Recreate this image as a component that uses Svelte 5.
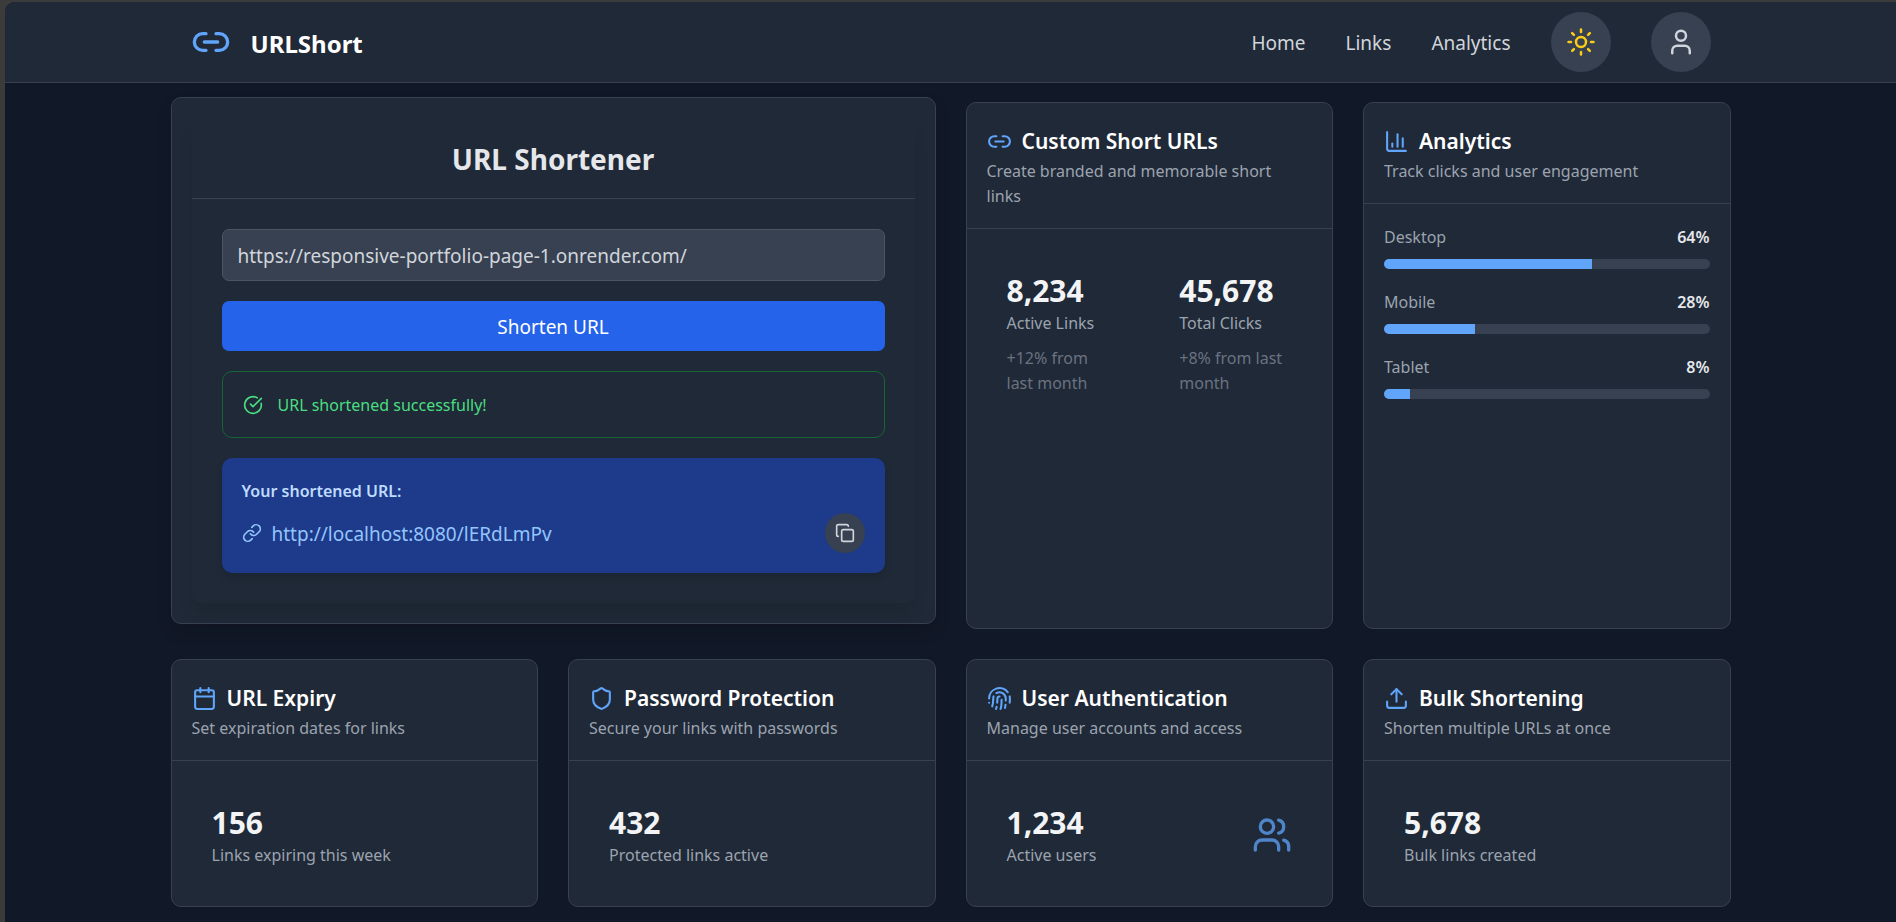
<script>
  const icons = {
    link2: '<path d="M9 17H7A5 5 0 0 1 7 7h2"/><path d="M15 7h2a5 5 0 1 1 0 10h-2"/><path d="M8 12h8"/>',
    sun: '<circle cx="12" cy="12" r="4"/><path d="M12 2v2"/><path d="M12 20v2"/><path d="m4.93 4.93 1.41 1.41"/><path d="m17.66 17.66 1.41 1.41"/><path d="M2 12h2"/><path d="M20 12h2"/><path d="m6.34 17.66-1.41 1.41"/><path d="m19.07 4.93-1.41 1.41"/>',
    user: '<path d="M19 21v-2a4 4 0 0 0-4-4H9a4 4 0 0 0-4 4v2"/><circle cx="12" cy="7" r="4"/>',
    check: '<path d="M21.801 10A10 10 0 1 1 17 3.335"/><path d="m9 11 3 3L22 4"/>',
    link: '<path d="M10 13a5 5 0 0 0 7.54.54l3-3a5 5 0 0 0-7.07-7.07l-1.72 1.71"/><path d="M14 11a5 5 0 0 0-7.54-.54l-3 3a5 5 0 0 0 7.07 7.07l1.71-1.71"/>',
    copy: '<rect x="8" y="8" width="14" height="14" rx="2"/><path d="M4 16c-1.1 0-2-.9-2-2V4c0-1.1.9-2 2-2h10c1.1 0 2 .9 2 2"/>',
    chart: '<path d="M3 3v16a2 2 0 0 0 2 2h16"/><path d="M18 17V9"/><path d="M13 17V5"/><path d="M8 17v-3"/>',
    calendar: '<path d="M8 2v4"/><path d="M16 2v4"/><rect x="3" y="4" width="18" height="18" rx="2"/><path d="M3 10h18"/>',
    shield: '<path d="M20 13c0 5-3.5 7.5-7.66 8.95a1 1 0 0 1-.67-.01C7.5 20.5 4 18 4 13V6a1 1 0 0 1 1-1c2 0 4.5-1.2 6.24-2.72a1.17 1.17 0 0 1 1.52 0C14.51 3.81 17 5 19 5a1 1 0 0 1 1 1z"/>',
    fingerprint: '<path d="M12 10a2 2 0 0 0-2 2c0 1.02-.1 2.51-.26 4"/><path d="M14 13.12c0 2.38 0 6.38-1 8.88"/><path d="M17.29 21.02c.12-.6.43-2.3.5-3.02"/><path d="M2 12a10 10 0 0 1 18-6"/><path d="M2 16h.01"/><path d="M21.8 16c.2-2 .131-5.354 0-6"/><path d="M5 19.5C5.5 18 6 15 6 12a6 6 0 0 1 .34-2"/><path d="M8.65 22c.21-.66.45-1.32.57-2"/><path d="M9 6.8a6 6 0 0 1 9 5.2v2"/>',
    users: '<path d="M16 21v-2a4 4 0 0 0-4-4H6a4 4 0 0 0-4 4v2"/><circle cx="9" cy="7" r="4"/><path d="M22 21v-2a4 4 0 0 0-3-3.87"/><path d="M16 3.13a4 4 0 0 1 0 7.75"/>',
    upload: '<path d="M21 15v4a2 2 0 0 1-2 2H5a2 2 0 0 1-2-2v-4"/><path d="m17 8-5-5-5 5"/><path d="M12 3v12"/>'
  };

  const devices = [
    { name: 'Desktop', share: 64 },
    { name: 'Mobile', share: 28 },
    { name: 'Tablet', share: 8 }
  ];

  const features = [
    { icon: 'calendar', title: 'URL Expiry', text: 'Set expiration dates for links', value: '156', label: 'Links expiring this week' },
    { icon: 'shield', title: 'Password Protection', text: 'Secure your links with passwords', value: '432', label: 'Protected links active' },
    { icon: 'fingerprint', title: 'User Authentication', text: 'Manage user accounts and access', value: '1,234', label: 'Active users', badge: 'users' },
    { icon: 'upload', title: 'Bulk Shortening', text: 'Shorten multiple URLs at once', value: '5,678', label: 'Bulk links created' }
  ];

  let url = $state('https://responsive-portfolio-page-1.onrender.com/');
  const shortUrl = 'http://localhost:8080/lERdLmPv';
</script>

{#snippet icon(name, kind)}
  <svg class="icon {kind}" viewBox="0 0 24 24" aria-hidden="true">{@html icons[name]}</svg>
{/snippet}

{#snippet heading(name, title, text)}
  <header class="card-head">
    <h2>{@render icon(name, 'title-icon')}{title}</h2>
    <p>{text}</p>
  </header>
{/snippet}

<div class="frame">
  <div class="page">
    <header class="topbar">
      <div class="bar">
        <a class="brand" href="#home">{@render icon('link2', 'large')}<span>URLShort</span></a>
        <nav>
          <a href="#home">Home</a>
          <a href="#links">Links</a>
          <a href="#analytics">Analytics</a>
          <button class="round sun" type="button" aria-label="Toggle theme">{@render icon('sun', 'medium')}</button>
          <button class="round" type="button" aria-label="Account">{@render icon('user', 'medium')}</button>
        </nav>
      </div>
    </header>

    <main>
      <section class="card raised">
        <div class="panel">
          <h1>URL Shortener</h1>
          <form onsubmit={(e) => e.preventDefault()}>
            <input type="text" aria-label="URL" bind:value={url} />
            <button class="submit" type="submit">Shorten URL</button>
            <div class="notice" role="status">{@render icon('check', 'small')}<span>URL shortened successfully!</span></div>
            <div class="result">
              <h3>Your shortened URL:</h3>
              <div class="result-row">
                <a href={shortUrl}>{@render icon('link', 'small')}<span>{shortUrl}</span></a>
                <button class="copy" type="button" aria-label="Copy">{@render icon('copy', 'small')}</button>
              </div>
            </div>
          </form>
        </div>
      </section>

      <section class="card">
        {@render heading('link2', 'Custom Short URLs', 'Create branded and memorable short links')}
        <div class="card-body pair">
          <div class="stat">
            <div>
              <strong>8,234</strong>
              <p>Active Links</p>
              <p class="trend">+12% from last month</p>
            </div>
          </div>
          <div class="stat">
            <div>
              <strong>45,678</strong>
              <p>Total Clicks</p>
              <p class="trend">+8% from last month</p>
            </div>
          </div>
        </div>
      </section>

      <section class="card">
        {@render heading('chart', 'Analytics', 'Track clicks and user engagement')}
        <div class="card-body devices">
          {#each devices as device}
            <div class="device">
              <div class="device-row"><span>{device.name}</span><b>{device.share}%</b></div>
              <div class="track" role="progressbar" aria-label={device.name} aria-valuenow={device.share} aria-valuemin="0" aria-valuemax="100">
                <div class="fill" style="width: {device.share}%"></div>
              </div>
            </div>
          {/each}
        </div>
      </section>

      {#each features as f}
        <section class="card">
          {@render heading(f.icon, f.title, f.text)}
          <div class="card-body">
            <div class="stat">
              <div>
                <strong>{f.value}</strong>
                <p>{f.label}</p>
              </div>
              {#if f.badge}{@render icon(f.badge, 'large faded')}{/if}
            </div>
          </div>
        </section>
      {/each}
    </main>
  </div>
</div>

<style>
  :global(body) {
    background: #3b3b3b;
  }

  .frame,
  .frame :global(*) {
    box-sizing: border-box;
  }

  .frame {
    display: flex;
    min-height: 100vh;
    padding: 2px 0 0 5px;
    font-family: "Noto Sans", "Open Sans", sans-serif;
    font-size: 16px;
    line-height: 25px;
    color: #9ca3af;
  }

  .page {
    flex: 1;
    background: #111827;
    border-top-left-radius: 10px;
    overflow: hidden;
  }

  h1, h2, h3, p {
    margin: 0;
  }

  a {
    color: inherit;
    text-decoration: none;
  }

  button {
    padding: 0;
    border: 0;
    font: inherit;
    cursor: pointer;
  }

  .icon {
    flex: none;
    width: 20px;
    height: 20px;
    fill: none;
    stroke: currentColor;
    stroke-width: 2;
    stroke-linecap: round;
    stroke-linejoin: round;
  }

  .title-icon {
    width: 25px;
    height: 25px;
    color: #60a5fa;
  }

  .medium {
    width: 30px;
    height: 30px;
  }

  .large {
    width: 40px;
    height: 40px;
    color: #60a5fa;
  }

  .faded {
    opacity: 0.75;
  }

  .topbar {
    background: #1f2937;
    border-bottom: 1px solid #374151;
  }

  .bar {
    display: flex;
    align-items: center;
    justify-content: space-between;
    max-width: 1600px;
    height: 80px;
    margin: 0 auto;
    padding: 0 40px;
  }

  .brand {
    display: flex;
    align-items: center;
    gap: 20px;
    font-size: 24px;
    font-weight: 700;
    color: #fff;
  }

  .brand span,
  .result-row span,
  nav a {
    padding-top: 2px;
  }

  nav {
    display: flex;
    align-items: center;
    gap: 40px;
    font-size: 19px;
    color: #d1d5db;
  }

  .round {
    display: grid;
    place-items: center;
    width: 60px;
    height: 60px;
    border-radius: 50%;
    background: #374151;
    color: #d1d5db;
  }

  .sun {
    color: #facc15;
  }

  main {
    display: grid;
    grid-template-columns: repeat(4, minmax(0, 1fr));
    gap: 30px;
    max-width: 1600px;
    margin: 0 auto;
    padding: 19px 20px 10px;
  }

  .card {
    background: #1f2937;
    border: 1px solid #374151;
    border-radius: 10px;
  }

  .raised {
    grid-column: span 2;
    padding: 20px;
    transform: translateY(-5px);
    box-shadow: 0 8px 16px rgba(0, 0, 0, 0.12);
  }

  .panel {
    border-radius: 10px;
    box-shadow: 0 12px 18px -4px rgba(0, 0, 0, 0.1);
  }

  h1 {
    padding: 21px 20px 19px;
    border-bottom: 1px solid #374151;
    font-size: 28px;
    line-height: 40px;
    font-weight: 700;
    text-align: center;
    color: #e5e7eb;
  }

  form {
    display: flex;
    flex-direction: column;
    gap: 20px;
    padding: 30px;
  }

  input {
    width: 100%;
    height: 52px;
    padding: 2px 15px 0;
    border: 1px solid #4b5563;
    border-radius: 7px;
    outline: 0;
    background: #374151;
    font: inherit;
    font-size: 19px;
    color: #d1d5db;
  }

  .submit {
    height: 50px;
    padding-top: 2px;
    border-radius: 7px;
    background: #2563eb;
    font-size: 19px;
    color: #fff;
  }

  .notice {
    display: flex;
    align-items: center;
    gap: 15px;
    padding: 21px 20px 20px;
    border: 1px solid #166534;
    border-radius: 10px;
    line-height: 24px;
    color: #4ade80;
  }

  .result {
    padding: 21px 20px 20px;
    border-radius: 10px;
    background: #1e3a8a;
    box-shadow: 0 5px 8px -1px rgba(0, 0, 0, 0.12);
  }

  h3 {
    margin-bottom: 9px;
    font-size: 16px;
    font-weight: 600;
    color: #bfdbfe;
  }

  .result-row,
  .result-row a {
    display: flex;
    align-items: center;
    gap: 10px;
    font-size: 19px;
    color: #93c5fd;
  }

  .result-row {
    justify-content: space-between;
  }

  .copy {
    display: grid;
    place-items: center;
    width: 40px;
    height: 40px;
    border-radius: 50%;
    background: #374151;
    color: #d1d5db;
  }

  .card-head {
    padding: 20px 30px 19px 20px;
    border-bottom: 1px solid #374151;
  }

  h2 {
    display: flex;
    align-items: center;
    gap: 10px;
    font-size: 21px;
    line-height: 36px;
    font-weight: 600;
    color: #fff;
  }

  .card-body {
    padding: 21px 20px 18px;
  }

  .pair {
    display: grid;
    grid-template-columns: 1fr 1fr;
    gap: 20px;
  }

  .stat {
    display: flex;
    align-items: center;
    justify-content: space-between;
    padding: 20px;
  }

  strong {
    display: block;
    font-size: 30px;
    line-height: 41px;
    font-weight: 700;
    color: #f3f4f6;
  }

  .trend {
    margin-top: 10px;
    padding-right: 5px;
    color: #6b7280;
  }

  .devices {
    display: flex;
    flex-direction: column;
    gap: 21px;
  }

  .device-row {
    display: flex;
    justify-content: space-between;
    margin-bottom: 9px;
  }

  b {
    font-weight: 600;
    color: #e5e7eb;
  }

  .track {
    height: 10px;
    border-radius: 5px;
    background: #374151;
    overflow: hidden;
  }

  .fill {
    height: 100%;
    background: #60a5fa;
  }
</style>
